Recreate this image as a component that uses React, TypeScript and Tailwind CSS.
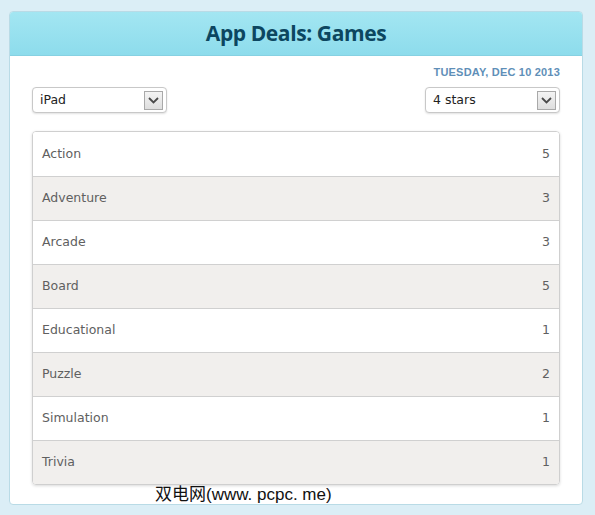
import React from "react";

const rows: [string, number][] = [
  ["Action", 5],
  ["Adventure", 3],
  ["Arcade", 3],
  ["Board", 5],
  ["Educational", 1],
  ["Puzzle", 2],
  ["Simulation", 1],
  ["Trivia", 1],
];

function Select({ label }: { label: string }) {
  return (
    <div className="flex h-[26px] w-[135px] items-center justify-between rounded-[4px] border border-[#c8c8c8] bg-white pl-[7px] pr-[3px] shadow-[0_1px_2px_rgba(0,0,0,0.12)]">
      <span className="text-[12.5px] text-[#222]" style={{ fontFamily: "'DejaVu Sans', sans-serif" }}>
        {label}
      </span>
      <div className="flex h-[19px] w-[19px] items-center justify-center border border-[#a9a9a9] bg-gradient-to-b from-[#f4f4f4] to-[#dedede]">
        <svg width="11" height="7" viewBox="0 0 11 7">
          <path d="M1 1 L5.5 5.5 L10 1" fill="none" stroke="#4a4a4a" strokeWidth="1.8" />
        </svg>
      </div>
    </div>
  );
}

export default function App() {
  return (
    <div className="h-[515px] w-[595px] bg-[#dbeef6] pl-[9px] pr-[12px] pt-[11px]" style={{ fontFamily: "'Lato', sans-serif" }}>
      <div className="h-[494px] overflow-hidden rounded-[4px] border border-[#b9dbe6] bg-white">
        <div className="flex h-[44px] items-center justify-center border-b border-[#86d1e2] bg-gradient-to-b from-[#a3e6f2] to-[#8ddcec]">
          <h1 className="text-[21px] font-bold text-[#0c4660]" style={{ fontFamily: "'Open Sans', sans-serif", letterSpacing: "-0.4px" }}>
            App Deals: Games
          </h1>
        </div>
        <div className="px-[22px]">
          <div className="mt-[10px] text-right text-[11px] font-bold uppercase leading-[13px] tracking-[0.2px] text-[#5f8fb8]" style={{ fontFamily: "'Liberation Sans', sans-serif" }}>
            Tuesday, Dec 10 2013
          </div>
          <div className="mt-[8px] flex justify-between">
            <Select label="iPad" />
            <Select label="4 stars" />
          </div>
          <div className="mt-[18px] overflow-hidden rounded-[4px] border border-[#cfcfcf] shadow-[0_1px_3px_rgba(0,0,0,0.15)]">
            {rows.map(([name, n], i) => (
              <div
                key={name}
                className={`flex h-[44px] items-center justify-between px-[9px] text-[12.5px] text-[#606060] ${i % 2 === 1 ? "bg-[#f1efed]" : "bg-white"} ${i > 0 ? "border-t border-[#d0d0d0]" : ""}`}
                style={{ fontFamily: "'DejaVu Sans', sans-serif" }}
              >
                <span>{name}</span>
                <span>{n}</span>
              </div>
            ))}
          </div>
          <div className="pl-[123px] text-[17px] leading-[20px] text-[#111]" style={{ fontFamily: "'Liberation Sans', 'Noto Sans CJK SC', sans-serif" }}>
            双电网(www. pcpc. me)
          </div>
        </div>
      </div>
    </div>
  );
}
